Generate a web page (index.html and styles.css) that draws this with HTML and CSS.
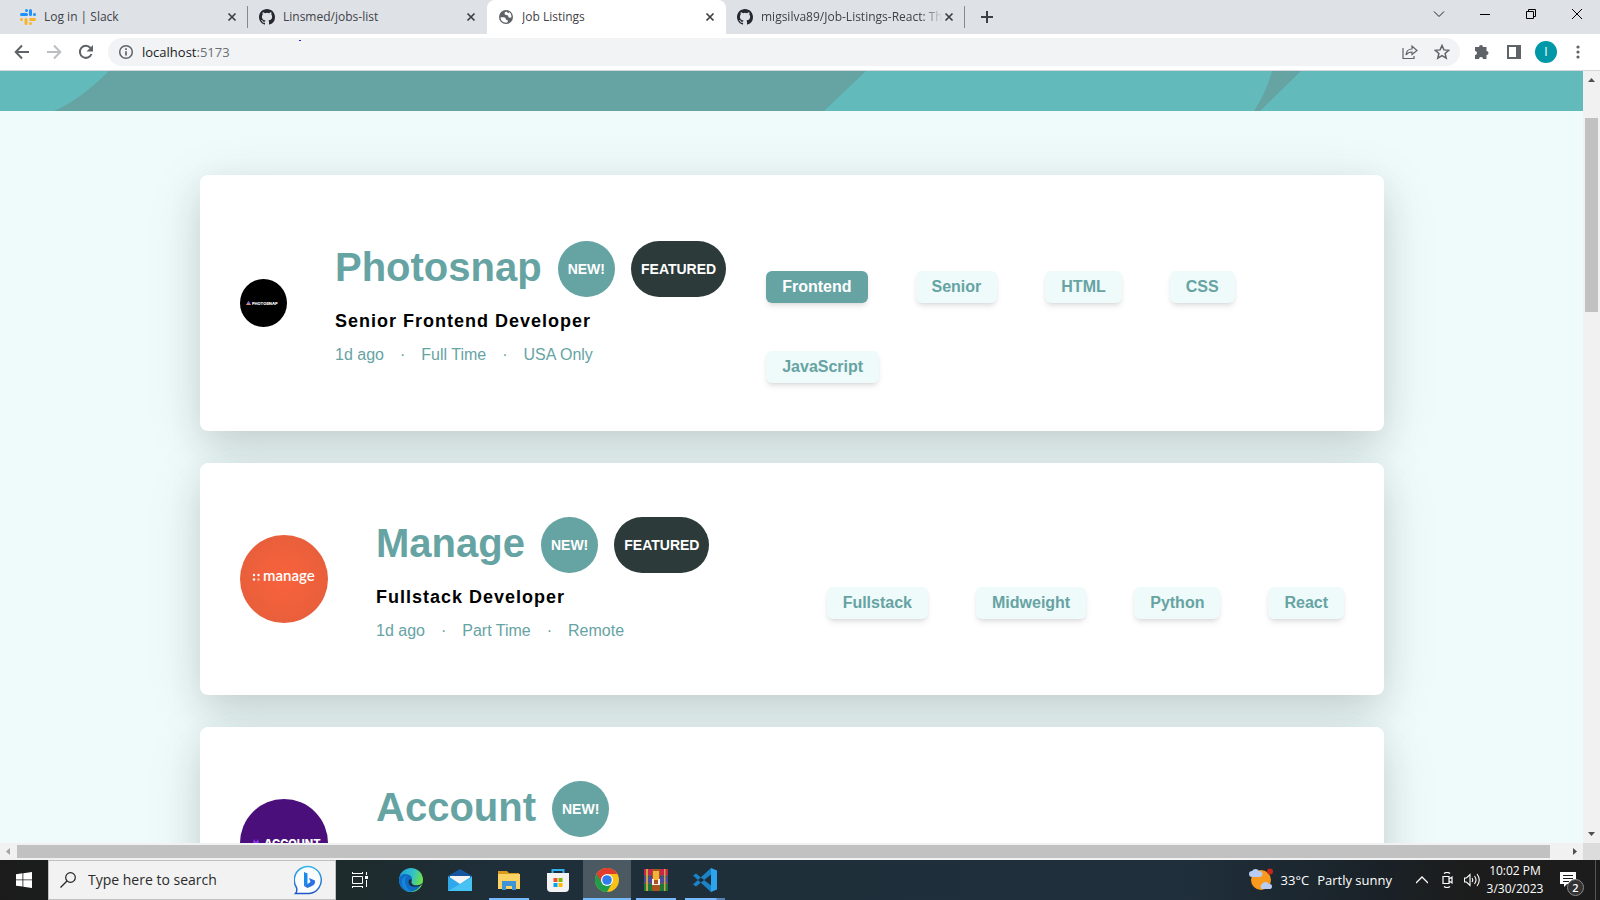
FILE: index.html
```html
<!DOCTYPE html>
<html lang="en">
<head>
<meta charset="utf-8">
<title>Job Listings</title>
<link rel="stylesheet" href="styles.css">
</head>
<body>
<svg class="defs" aria-hidden="true">
  <symbol id="close" viewBox="0 0 16 16"><path d="M4.500 4.500l7 7M11.500 4.500l-7 7" stroke="#3c4043" stroke-width="1.700" fill="none"/></symbol>
  <symbol id="github" viewBox="0 0 16 16"><path fill="#24292f" d="M8 0C3.580 0 0 3.580 0 8c0 3.540 2.290 6.530 5.470 7.590.4.070.55-.17.55-.38 0-.19-.01-.82-.01-1.490-2.010.37-2.530-.49-2.690-.94-.09-.23-.48-.94-.82-1.130-.28-.15-.68-.52-.01-.53.63-.01 1.080.58 1.230.82.72 1.210 1.870.87 2.330.66.070-.52.28-.87.51-1.070-1.780-.2-3.640-.89-3.640-3.950 0-.87.31-1.590.82-2.150-.08-.2-.36-1.020.08-2.120 0 0 .67-.21 2.200.82a7.600 7.600 0 014 0c1.530-1.040 2.200-.82 2.200-.82.44 1.100.16 1.920.08 2.120.51.56.82 1.270.82 2.150 0 3.070-1.870 3.750-3.650 3.950.29.25.54.73.54 1.480 0 1.070-.01 1.930-.01 2.200 0 .21.15.46.55.38A8.010 8.010 0 0016 8c0-4.420-3.580-8-8-8z"/></symbol>
</svg>

<header class="browser">
  <div class="tabstrip">
    <div class="tabs">
      <div class="tab">
        <svg class="favicon" viewBox="0 0 16 16"><g fill="#1e90ff"><rect x="5" y="0" width="3" height="3" rx="1.500"/><rect x="0" y="4" width="8" height="3" rx="1.500"/><rect x="9" y="0" width="3" height="7" rx="1.500"/><rect x="13" y="4" width="3" height="3" rx="1.500"/></g><g fill="#f7b52c"><rect x="0" y="9" width="3" height="3" rx="1.500"/><rect x="4.500" y="9" width="3" height="7" rx="1.500"/><rect x="9" y="9" width="7" height="3" rx="1.500"/><rect x="9" y="13" width="3" height="3" rx="1.500"/></g></svg>
        <span class="tab-title">Log in | Slack</span>
        <button class="tab-close" aria-label="Close tab"><svg viewBox="0 0 16 16"><use href="#close"/></svg></button>
      </div>
      <div class="tab tab-plain">
        <svg class="favicon" viewBox="0 0 16 16"><use href="#github"/></svg>
        <span class="tab-title">Linsmed/jobs-list</span>
        <button class="tab-close" aria-label="Close tab"><svg viewBox="0 0 16 16"><use href="#close"/></svg></button>
      </div>
      <div class="tab tab-active">
        <svg class="favicon" viewBox="0 0 16 16"><circle cx="8" cy="8" r="7" fill="#5f6368"/><path d="M2.500 8.300h3.200q2 0 2.200 1.600t1.900 1.300v1.300q0 .9-1.400 1.300-5.700-.3-5.900-5.500zM8.500 2.500q-2 .4-2 2t2 1.400q1.800-.1 1.800 1.500t3 1.200q.8-3.800-2.300-5.700l-.6 1.500z" fill="#fff"/></svg>
        <span class="tab-title">Job Listings</span>
        <button class="tab-close" aria-label="Close tab"><svg viewBox="0 0 16 16"><use href="#close"/></svg></button>
      </div>
      <div class="tab">
        <svg class="favicon" viewBox="0 0 16 16"><use href="#github"/></svg>
        <span class="tab-title tab-fade">migsilva89/Job-Listings-React: Th</span>
        <button class="tab-close" aria-label="Close tab"><svg viewBox="0 0 16 16"><use href="#close"/></svg></button>
      </div>
    </div>
    <button class="new-tab" aria-label="New tab"><svg viewBox="0 0 16 16"><path d="M8 2v12M2 8h12" stroke="#3c4043" stroke-width="2"/></svg></button>
    <div class="window-controls">
      <button aria-label="Search tabs"><svg viewBox="0 0 12 12"><path d="M1 3.500l5 5 5-5" fill="none" stroke="#222"/></svg></button>
      <button aria-label="Minimize"><svg viewBox="0 0 12 12"><path d="M1 6.500h10" stroke="#000"/></svg></button>
      <button aria-label="Restore"><svg viewBox="0 0 12 12"><path d="M1.500 3.500h7v7h-7zM3.500 3.500v-2h7v7h-2" fill="none" stroke="#000"/></svg></button>
      <button aria-label="Close"><svg viewBox="0 0 12 12"><path d="M1 1l10 10M11 1L1 11" stroke="#000"/></svg></button>
    </div>
  </div>
  <div class="toolbar">
    <button class="nav" aria-label="Back"><svg viewBox="0 0 16 16"><path d="M15 8H2M8 1.500L1.700 8 8 14.500" fill="none" stroke="#5f6368" stroke-width="2"/></svg></button>
    <button class="nav" aria-label="Forward"><svg viewBox="0 0 16 16"><path d="M1 8h13M8 1.500L14.300 8 8 14.500" fill="none" stroke="#bcbfc2" stroke-width="2"/></svg></button>
    <button class="nav" aria-label="Reload"><svg viewBox="0 0 16 16"><path d="M13.500 10A6 6 0 1 1 12.500 4" fill="none" stroke="#5f6368" stroke-width="2"/><path d="M15 1v6.500H8.500z" fill="#5f6368"/></svg></button>
    <div class="omnibox">
      <svg class="info" viewBox="0 0 16 16"><circle cx="8" cy="8" r="6.300" fill="none" stroke="#5f6368" stroke-width="1.500"/><path d="M8 7.200v4.300M8 4.300v1.700" stroke="#5f6368" stroke-width="1.700"/></svg>
      <a class="url" href="#listings">localhost<span>:5173</span></a>
      <i class="speck"></i>
      <button aria-label="Share"><svg viewBox="0 0 16 16"><path d="M1 4v10.500h11V12M4 11q.5-6 6-6V2l5 4.500-5 4V8Q6 8 4 11z" fill="none" stroke="#5f6368" stroke-width="1.200"/></svg></button>
      <button aria-label="Bookmark"><svg viewBox="0 0 16 16"><path d="M8 1.500l1.900 4.400 4.800.4-3.600 3.200 1.100 4.700L8 11.700l-4.200 2.500 1.100-4.700-3.600-3.200 4.800-.4z" fill="none" stroke="#5f6368" stroke-width="1.500"/></svg></button>
    </div>
    <div class="tools">
      <button aria-label="Extensions"><svg viewBox="0 0 16 16"><path d="M5 3a2 2 0 0 1 4 0h3.500v4a2 2 0 0 1 0 4v4H9a2 2 0 0 0-4 0H1v-4a2 2 0 0 0 0-4V3z" fill="#5f6368"/></svg></button>
      <button aria-label="Side panel"><svg viewBox="0 0 16 16"><path d="M2 2h12v12H2z" fill="none" stroke="#5f6368" stroke-width="2"/><path d="M10 2h4v12h-4z" fill="#5f6368"/></svg></button>
      <button class="avatar" aria-label="Profile">I</button>
      <button aria-label="Menu"><svg viewBox="0 0 16 16"><g fill="#5f6368"><circle cx="8" cy="3" r="1.600"/><circle cx="8" cy="8" r="1.600"/><circle cx="8" cy="13" r="1.600"/></g></svg></button>
    </div>
  </div>
</header>

<div class="viewport">
  <main class="page" id="listings">
    <svg class="banner" viewBox="0 0 1583 40" preserveAspectRatio="none"><path d="M0 0h1583v40H0z" fill="#63baba"/><path d="M109 0Q80 29 54 40H824L866 0zM1272 0Q1267 20 1254 40H1260L1301 0z" fill="#66a3a3"/></svg>
    <div class="cards">
      <article class="card">
        <svg class="logo logo-small" viewBox="0 0 47 48"><ellipse cx="23.500" cy="24" rx="23.500" ry="24"/><path d="M6 26l2.500-4 2.500 4z" fill="#e88a6a"/><path d="M8.500 22l1.500 2.500H7z" fill="#5a5cf0"/><text class="mark-photosnap" x="12" y="26">PHOTOSNAP</text></svg>
        <div class="info-block">
          <div class="company"><h2>Photosnap</h2><span class="badge">NEW!</span><span class="badge badge-dark">FEATURED</span></div>
          <h3>Senior Frontend Developer</h3>
          <p class="meta"><span>1d ago</span><span>·</span><span>Full Time</span><span>·</span><span>USA Only</span></p>
        </div>
        <div class="tags">
          <button class="tag tag-on">Frontend</button><button class="tag">Senior</button><button class="tag">HTML</button><button class="tag">CSS</button><button class="tag">JavaScript</button>
        </div>
      </article>
      <article class="card">
        <svg class="logo" viewBox="0 0 88 88"><defs><radialGradient id="orange"><stop offset="0" stop-color="#f8623c"/><stop offset="1" stop-color="#e95f3b"/></radialGradient></defs><circle cx="44" cy="44" r="44" fill="url(#orange)"/><g fill="#fff"><circle cx="14" cy="40" r="1.200"/><circle cx="18.500" cy="40" r="1.200"/><circle cx="14" cy="44.500" r="1.200"/><circle cx="18.500" cy="44.500" r="1.200" opacity=".6"/></g><text class="mark-manage" x="23" y="46">manage</text></svg>
        <div class="info-block">
          <div class="company"><h2>Manage</h2><span class="badge">NEW!</span><span class="badge badge-dark">FEATURED</span></div>
          <h3>Fullstack Developer</h3>
          <p class="meta"><span>1d ago</span><span>·</span><span>Part Time</span><span>·</span><span>Remote</span></p>
        </div>
        <div class="tags">
          <button class="tag">Fullstack</button><button class="tag">Midweight</button><button class="tag">Python</button><button class="tag">React</button>
        </div>
      </article>
      <article class="card">
        <svg class="logo" viewBox="0 0 88 88"><circle cx="44" cy="44" r="44" fill="#4b0f7c"/><path d="M12 48l2-8 2 3 2-3 2 8z" fill="#8a35e8"/><text class="mark-account" x="24" y="48">ACCOUNT</text></svg>
        <div class="info-block">
          <div class="company"><h2>Account</h2><span class="badge">NEW!</span></div>
        </div>
      </article>
    </div>
  </main>
  <div class="vbar"><svg viewBox="0 0 17 17"><path d="M5 11h7L8.500 7z" fill="#505050"/></svg><i></i><svg viewBox="0 0 17 17"><path d="M5 6h7l-3.500 4z" fill="#505050"/></svg></div>
  <div class="hbar"><svg viewBox="0 0 17 17"><path d="M10 5v7L6 8.500z" fill="#a3a3a3"/></svg><i></i><svg viewBox="0 0 17 17"><path d="M7 5v7l4-3.500z" fill="#505050"/></svg></div>
  <div class="corner"></div>
</div>

<footer class="taskbar">
  <button class="start" aria-label="Start"><svg viewBox="0 0 16 16"><path d="M0 2.200l6.500-.9v6.200H0zM7.300 1.200L16 0v7.500H7.300zM0 8.300h6.500v6.300L0 13.700zM7.300 8.300H16V16l-8.700-1.200z" fill="#fff"/></svg></button>
  <label class="search">
    <svg class="lens" viewBox="0 0 16 16"><circle cx="10.500" cy="5.500" r="4.800" fill="none" stroke="#222" stroke-width="1.200"/><path d="M7 9L.5 15.500" stroke="#222" stroke-width="1.200"/></svg>
    <input type="text" placeholder="Type here to search" aria-label="Type here to search">
    <svg class="bing" viewBox="0 0 30 30"><defs><linearGradient id="bub" x2="0" y2="1"><stop stop-color="#35b4ea"/><stop offset="1" stop-color="#1f56c8"/></linearGradient></defs><path d="M1.500 28.500q2-2 1-6A13.500 13.500 0 1 1 15 28.500z" fill="#fafdff" stroke="url(#bub)" stroke-width="1.500"/><path d="M10 7l3.500 1.500v11L10 21z" fill="#1a8ae8"/><path d="M10 21l3.500-2 3-2-1.500-4 6 2.500q.5 4-3 5.500l-4.500 2z" fill="#2a72e0"/></svg>
  </label>
  <button class="slot" aria-label="Task view"><svg class="i16" viewBox="0 0 16 16"><path d="M0 1.500h11M0 14.500h11M.5 4.500h10v7H.5zM.5 0v2M10.500 0v2M.5 14v2M10.500 14v2M14.500 0v3M14.500 8v7" fill="none" stroke="#fff"/><path d="M13 4h3v3h-3z" fill="#fff"/></svg></button>
  <nav class="apps">
    <button class="slot" aria-label="Edge"><svg viewBox="0 0 24 24"><defs><linearGradient id="edge" x2="1" y2=".3"><stop stop-color="#1b9de2"/><stop offset=".6" stop-color="#35c1c8"/><stop offset="1" stop-color="#6be04b"/></linearGradient></defs><circle cx="12" cy="12" r="12" fill="url(#edge)"/><path d="M0 12C1 6 5 5 9 6.500c5 1.500 4 5 3.500 7 0 4 5 5 9.500 3C19 23 12 25 6 22.500 2 20 0 16 0 12z" fill="#0f6cc4"/><path d="M8 8c-4 3-2 12 5 15.800C4 24 2 16 3 12q1.500-4 5-4z" fill="#1684dc"/><path d="M13 11.500q-2 3 .5 5t8 0q2.500-2 2.500-1-4 4-10 3t-4-7z" fill="#1f2f39"/></svg></button>
    <button class="slot" aria-label="Mail"><svg viewBox="0 0 24 24"><path d="M0 8l12-7 12 7v5H0z" fill="#1556a0"/><path d="M2 8h20v9H2z" fill="#f4f4f4"/><path d="M0 8l12 8 12-8v15H0z" fill="#2fa8ea"/><path d="M0 23L24 9v14z" fill="#47c2f2"/></svg></button>
    <button class="slot open" aria-label="File Explorer"><svg viewBox="0 0 24 24"><path d="M1 3h9l2 2h10v5H1z" fill="#dc9a1c"/><path d="M1 6h22v15H1z" fill="#fbd263"/><path d="M5 22v-9h14v9h-4v-4H9v4z" fill="#3f94d8"/></svg></button>
    <button class="slot" aria-label="Microsoft Store"><svg viewBox="0 0 24 24"><path d="M6.500 6V2h11v4" fill="none" stroke="#2fb0ee" stroke-width="2"/><path d="M1 5h22v15q0 4-4 4H5q-4 0-4-4z" fill="#f3f3f3"/><path d="M7.500 10h4v4h-4z" fill="#f25022"/><path d="M12.500 10h4v4h-4z" fill="#7fba00"/><path d="M7.500 15h4v4h-4z" fill="#00a4ef"/><path d="M12.500 15h4v4h-4z" fill="#ffb900"/></svg></button>
    <button class="slot open current" aria-label="Chrome"><svg viewBox="0 0 24 24"><circle cx="12" cy="12" r="12" fill="#fbc116"/><path d="M12 12L1.600 6A12 12 0 0 0 12 24l5.200-9z" fill="#1e9e4b"/><path d="M1.600 6a12 12 0 0 1 20.800 0H12v6l-5 3z" fill="#e33b2e"/><circle cx="12" cy="12" r="6" fill="#fff"/><circle cx="12" cy="12" r="4.800" fill="#2f7de9"/></svg></button>
    <button class="slot open" aria-label="WinRAR"><svg viewBox="0 0 24 24"><path d="M0 1h24v7H0z" fill="#c8244e"/><path d="M0 8.500h24v7H0z" fill="#4a4a9e"/><path d="M0 16h24v7H0z" fill="#19783a"/><path d="M0 7h24v1.500H0zM0 14.500h24V16H0z" fill="#6b5560"/><path d="M2 1h2v22H2zM20 1h1.500v22H20z" fill="#c9a441"/><path d="M8 1h8v22H8z" fill="#a8541c"/><path d="M9 3h6v9H9z" fill="#f2b23c"/><path d="M8 11h2v5h4v-5h2v6H8z" fill="#eee"/></svg></button>
    <button class="slot open multi" aria-label="Visual Studio Code"><svg viewBox="0 0 24 24"><path d="M18 0l6 2.500v19L18 24z" fill="#2aa5ee"/><path d="M18 0v6.500L3 18.500l-3-2zM18 24v-6.500L3 5.500l-3 2z" fill="#1b84c8"/></svg></button>
  </nav>
  <div class="tray">
    <svg class="weather" viewBox="0 0 24 24"><circle cx="12" cy="12" r="10" fill="#f79a1e"/><circle cx="21" cy="3.500" r="3" fill="#c4261d"/><path d="M3 9a3 3 0 0 1 0-6 4 4 0 0 1 7 0 3 3 0 0 1 1 6zM13 21a3 3 0 0 1 0-5 4 4 0 0 1 7 0 2.500 2.500 0 0 1 1 5z" fill="#b9cdf2"/></svg>
    <span class="temp">33°C</span><span class="sky">Partly sunny</span>
    <svg class="i12" viewBox="0 0 12 12"><path d="M0 9l6-6 6 6" fill="none" stroke="#fff" stroke-width="1.300"/></svg>
    <svg class="i16 cam" viewBox="0 0 16 16"><path d="M3 4.500h6v7H3zM9 7l3-2v6L9 9M4 1.500q3-2 6 0M4 14.500q3 2 6 0" fill="none" stroke="#fff" stroke-width="1.200"/></svg>
    <svg class="i16" viewBox="0 0 16 16"><path d="M.5 6h2L6 2.500v11L2.500 10h-2zM8 6q1.500 2 0 4M10.500 4q3 4 0 8M13 2q4.500 6 0 12" fill="none" stroke="#fff" stroke-width="1.100"/></svg>
    <div class="clock"><span>10:02 PM</span><span>3/30/2023</span></div>
    <button class="notes" aria-label="Notifications"><svg viewBox="0 0 16 16"><path d="M0 0h16v12H7l-3 3v-3H0z" fill="#fff"/><path d="M3 3.500h10M3 6.500h10M3 9.500h6" stroke="#1c1c1c"/></svg><span>2</span></button>
  </div>
</footer>
</body>
</html>
```
FILE: styles.css
```css
* { box-sizing: border-box; }
body {
  margin: 0;
  height: 100vh;
  display: flex;
  flex-direction: column;
  overflow: hidden;
  font-family: "Liberation Sans", Arial, sans-serif;
}
button { border: 0; padding: 0; background: none; font: inherit; color: inherit; }
svg { display: block; flex: none; }
.defs { position: absolute; width: 0; height: 0; }
h2, h3, p { margin: 0; }

/* browser frame */
.browser { flex: none; font-family: "Open Sans", "Noto Sans", sans-serif; border-bottom: 1px solid #d5d7da; }
.tabstrip { display: flex; align-items: flex-start; height: 34px; background: #dee1e6; }
.tabs { display: flex; padding-left: 9px; }
.tab {
  width: 239px; height: 34px; padding: 0 7px 0 11px;
  display: flex; align-items: center; gap: 8px;
  border-right: 1px solid transparent;
  border-image: linear-gradient(transparent 7px, #85898d 7px, #85898d 27px, transparent 27px) 1;
}
.tab-plain, .tab-active { border-image: none; }
.tab-active { background: #fff; border-radius: 8px 8px 0 0; }
.favicon { width: 16px; height: 16px; }
.tab-title { flex: 1; min-width: 0; overflow: hidden; white-space: nowrap; font-size: 12px; line-height: 16px; color: #3f4246; }
.tab-fade { margin-right: -10px; -webkit-mask-image: linear-gradient(90deg, #000 88%, transparent); mask-image: linear-gradient(90deg, #000 88%, transparent); }
.tab-close svg { width: 16px; height: 16px; }
.new-tab { margin: 9px 0 0 14px; }
.new-tab svg { width: 16px; height: 16px; }
.window-controls { display: flex; margin-left: auto; }
.window-controls button { width: 46px; height: 28px; display: grid; place-items: center; }
.window-controls svg { width: 12px; height: 12px; }

.toolbar { display: flex; align-items: center; height: 36px; padding: 0 6px; background: #fff; }
.nav, .tools button { width: 32px; display: grid; place-items: center; }
.nav svg { width: 16px; height: 16px; }
.omnibox {
  position: relative; flex: 1; height: 28px; margin-left: 6px; padding: 0 10px;
  display: flex; align-items: center; gap: 16px;
  border-radius: 14px; background: #f1f3f4;
}
.omnibox svg { width: 16px; height: 16px; }
.url { flex: 1; margin-left: -8px; font-size: 13px; line-height: 18px; color: #202124; text-decoration: none; }
.url span { color: #6a6e73; }
.speck { position: absolute; left: 191px; top: 2px; width: 2px; height: 1px; background: #2020e0; }
.tools { display: flex; align-items: center; margin-left: 6px; }
.tools svg { width: 16px; height: 16px; }
.tools .avatar { width: 22px; height: 22px; margin: 0 5px; border-radius: 50%; background: #0097a7; color: #fff; font-size: 12px; line-height: 22px; }

/* visible part of the page and its scrollbars */
.viewport { flex: 1; min-height: 0; display: grid; grid-template: minmax(0, 1fr) 17px / minmax(0, 1fr) 17px; }
.page { overflow: hidden; background: #effafa; }
.banner { width: 100%; height: 40px; }
.vbar, .hbar { display: flex; background: #f1f1f1; }
.vbar { grid-area: 1 / 2; flex-direction: column; }
.hbar { grid-area: 2 / 1; }
.vbar svg, .hbar svg { width: 17px; height: 17px; }
.vbar i { height: 194px; margin: 30px 2px auto; background: #c1c1c1; }
.hbar i { flex: 1; margin: 2px 16px 2px 0; background: #c1c1c1; }
.corner { background: #dcdcdc; }

/* listings */
.cards { display: flex; flex-direction: column; gap: 32px; margin: 64px 199px 0 200px; }
.card {
  display: flex; align-items: center; min-height: 232px; padding: 48px 40px;
  border-radius: 8px; background: #fff;
  box-shadow: 0 12px 60px rgba(44, 58, 58, .1), 0 14px 36px -4px rgba(44, 58, 58, .16);
}
.logo { width: 88px; height: 88px; margin-right: 48px; }
.logo-small { width: 47px; height: 48px; }
.logo text { font-family: Inter, sans-serif; fill: #fff; }
.mark-photosnap { font-size: 4px; font-weight: 800; }
.logo .mark-manage { font-family: Lato, sans-serif; font-size: 15px; font-weight: 600; }
.mark-account { font-size: 11px; font-weight: 800; }
.info-block { flex: none; min-height: 124px; display: flex; flex-direction: column; gap: 8px; color: #66a3a3; }
.company { display: flex; align-items: center; gap: 16px; }
.company h2 { padding-bottom: 4px; font-size: 40px; line-height: 52px; font-weight: 700; }
.badge { padding: 18px 10px; border-radius: 28px; background: #66a3a3; color: #fff; font-size: 14px; line-height: 20px; font-weight: 700; }
.badge-dark { background: #2c3a3a; }
.info-block h3 { color: #000; font-size: 18px; line-height: 32px; font-weight: 700; letter-spacing: 1px; }
.meta { display: flex; gap: 16px; font-size: 16px; line-height: 20px; }
.tags { display: flex; flex-wrap: wrap; gap: 48px; margin-left: auto; padding: 48px 0 0 40px; }
.tag {
  height: 32px; padding: 0 16px; border-radius: 6px;
  background: #effafa; color: #66a3a3; font-size: 16px; font-weight: 700;
  box-shadow: 0 4px 6px -1px rgba(0, 0, 0, .1), 0 2px 4px -2px rgba(0, 0, 0, .1);
}
.tag-on { background: #66a3a3; color: #fff; }

/* taskbar */
.taskbar {
  flex: none; height: 40px; display: flex; color: #fff;
  font-family: "Open Sans", "Noto Sans", sans-serif;
  background: linear-gradient(90deg, #1b1b1b 0, #1d2b2c 22%, #1f2f3a 32%, #1f2f3b 74%, #1a2228 86%, #1c1c1c 92%);
}
.taskbar button { display: grid; place-items: center; }
.start { width: 48px; }
.start svg, .i16 { width: 16px; height: 16px; }
.i12 { width: 12px; height: 12px; }
.search { width: 288px; padding: 0 11px; display: flex; align-items: center; gap: 12px; border: 1px solid #c0c0c0; background: #f2f2f2; }
.lens { width: 16px; height: 16px; }
.search input { flex: 1; min-width: 0; padding: 0; border: 0; outline: 0; background: none; font: 14px/20px "Open Sans", "Noto Sans", sans-serif; }
.search input::placeholder { color: #2b2b2b; }
.bing { width: 30px; height: 30px; }
.taskbar .i16 { width: 16px; height: 16px; }
.slot { width: 48px; height: 40px; }
.apps { display: flex; gap: 1px; margin-left: 3px; }
.apps svg { width: 24px; height: 24px; }
.open { background: linear-gradient(#76b9ff, #76b9ff) 50% 100% / 40px 2px no-repeat; }
.current { background: linear-gradient(#76b9ff, #76b9ff) 0 100% / 48px 2px no-repeat, #4b5962; }
.multi { background: linear-gradient(90deg, #76b9ff 31px, #5684b5 32px) 4px 100% / 40px 2px no-repeat; }
.tray { display: flex; align-items: center; margin-left: auto; padding-right: 4px; border-right: 1px solid #555; margin-right: 4px; font-size: 13px; line-height: 18px; }
.weather { width: 24px; height: 24px; margin-right: 8px; }
.temp { margin-right: 8px; }
.sky { margin-right: 24px; }
.cam { margin: 0 8px 0 12px; }
.clock { display: flex; flex-direction: column; align-items: center; width: 60px; margin-left: 5px; font-size: 12px; line-height: 18px; white-space: nowrap; }
.notes { position: relative; width: 46px; height: 40px; }
.notes svg { width: 16px; height: 16px; }
.notes span {
  position: absolute; left: 22px; top: 19px; width: 17px; height: 17px; border: 1px solid #8a8a8a; border-radius: 50%;
  background: #333; font-size: 11px; line-height: 15px; font-weight: 600;
}
```
